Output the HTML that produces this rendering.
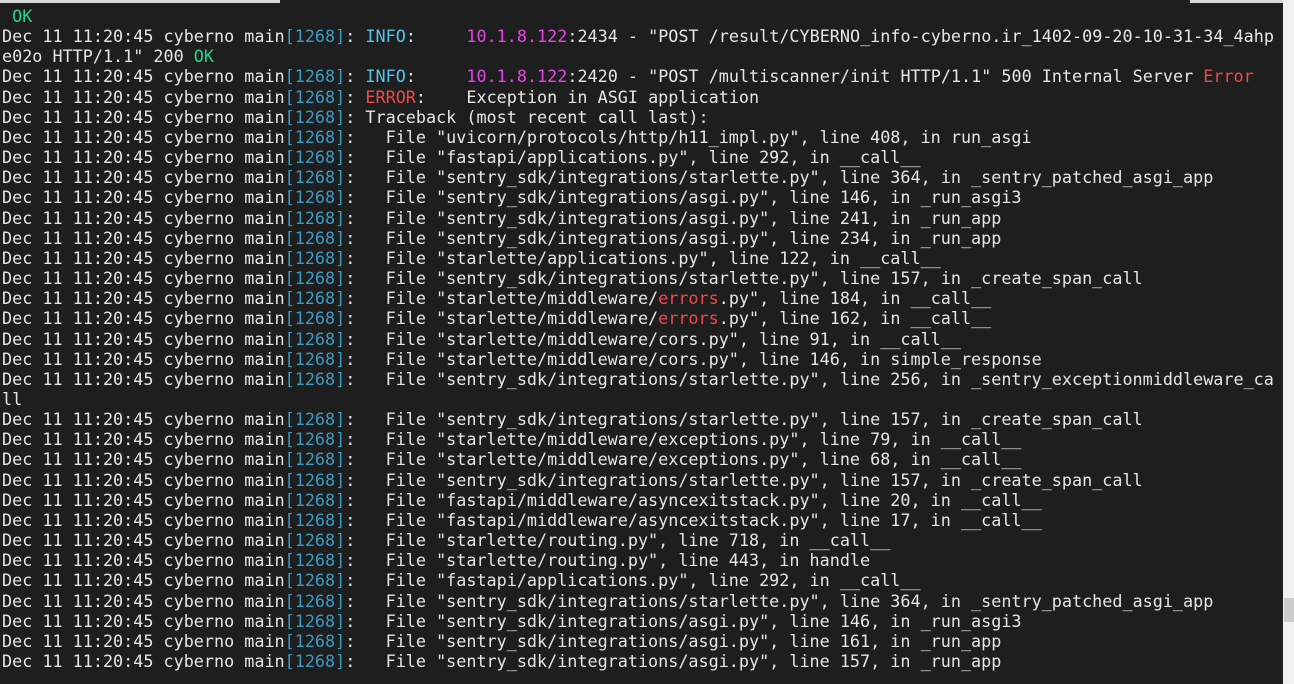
<!DOCTYPE html>
<html><head><meta charset="utf-8"><style>
html,body{margin:0;padding:0;overflow:hidden;width:1294px;height:684px;}
body{background:#1e1e1e;position:relative;}
.top{position:absolute;left:0;top:0;width:280px;height:3px;background:#d8d8d8;}
.top2{position:absolute;left:1190px;top:0;width:93px;height:3px;background:#d8d8d8;}
.sb{position:absolute;left:1283px;top:0;width:11px;height:684px;background:#f1f1f1;}
.th{position:absolute;left:1284px;top:598px;width:10px;height:24px;background:#cdcdcd;}
pre{position:absolute;left:2px;top:6px;margin:0;font-family:"DejaVu Sans Mono","Liberation Mono",monospace;font-size:16.78px;line-height:20.15px;color:#e6e6e6;}
.c{color:#3a9cc4}.i{color:#56c3ea}.m{color:#e545e5}.g{color:#24d38c}.r{color:#f0494c}
</style></head><body>
<div class="top"></div><div class="top2"></div>
<pre> <span class="g">OK</span>
Dec 11 11:20:45 cyberno main<span class="c">[1268]</span>: <span class="i">INFO</span>:     <span class="m">10.1.8.122</span>:2434 - "POST /result/CYBERNO_info-cyberno.ir_1402-09-20-10-31-34_4ahp
e02o HTTP/1.1" 200 <span class="g">OK</span>
Dec 11 11:20:45 cyberno main<span class="c">[1268]</span>: <span class="i">INFO</span>:     <span class="m">10.1.8.122</span>:2420 - "POST /multiscanner/init HTTP/1.1" 500 Internal Server <span class="r">Error</span>
Dec 11 11:20:45 cyberno main<span class="c">[1268]</span>: <span class="r">ERROR</span>:    Exception in ASGI application
Dec 11 11:20:45 cyberno main<span class="c">[1268]</span>: Traceback (most recent call last):
Dec 11 11:20:45 cyberno main<span class="c">[1268]</span>:   File "uvicorn/protocols/http/h11_impl.py", line 408, in run_asgi
Dec 11 11:20:45 cyberno main<span class="c">[1268]</span>:   File "fastapi/applications.py", line 292, in __call__
Dec 11 11:20:45 cyberno main<span class="c">[1268]</span>:   File "sentry_sdk/integrations/starlette.py", line 364, in _sentry_patched_asgi_app
Dec 11 11:20:45 cyberno main<span class="c">[1268]</span>:   File "sentry_sdk/integrations/asgi.py", line 146, in _run_asgi3
Dec 11 11:20:45 cyberno main<span class="c">[1268]</span>:   File "sentry_sdk/integrations/asgi.py", line 241, in _run_app
Dec 11 11:20:45 cyberno main<span class="c">[1268]</span>:   File "sentry_sdk/integrations/asgi.py", line 234, in _run_app
Dec 11 11:20:45 cyberno main<span class="c">[1268]</span>:   File "starlette/applications.py", line 122, in __call__
Dec 11 11:20:45 cyberno main<span class="c">[1268]</span>:   File "sentry_sdk/integrations/starlette.py", line 157, in _create_span_call
Dec 11 11:20:45 cyberno main<span class="c">[1268]</span>:   File "starlette/middleware/<span class="r">errors</span>.py", line 184, in __call__
Dec 11 11:20:45 cyberno main<span class="c">[1268]</span>:   File "starlette/middleware/<span class="r">errors</span>.py", line 162, in __call__
Dec 11 11:20:45 cyberno main<span class="c">[1268]</span>:   File "starlette/middleware/cors.py", line 91, in __call__
Dec 11 11:20:45 cyberno main<span class="c">[1268]</span>:   File "starlette/middleware/cors.py", line 146, in simple_response
Dec 11 11:20:45 cyberno main<span class="c">[1268]</span>:   File "sentry_sdk/integrations/starlette.py", line 256, in _sentry_exceptionmiddleware_ca
ll
Dec 11 11:20:45 cyberno main<span class="c">[1268]</span>:   File "sentry_sdk/integrations/starlette.py", line 157, in _create_span_call
Dec 11 11:20:45 cyberno main<span class="c">[1268]</span>:   File "starlette/middleware/exceptions.py", line 79, in __call__
Dec 11 11:20:45 cyberno main<span class="c">[1268]</span>:   File "starlette/middleware/exceptions.py", line 68, in __call__
Dec 11 11:20:45 cyberno main<span class="c">[1268]</span>:   File "sentry_sdk/integrations/starlette.py", line 157, in _create_span_call
Dec 11 11:20:45 cyberno main<span class="c">[1268]</span>:   File "fastapi/middleware/asyncexitstack.py", line 20, in __call__
Dec 11 11:20:45 cyberno main<span class="c">[1268]</span>:   File "fastapi/middleware/asyncexitstack.py", line 17, in __call__
Dec 11 11:20:45 cyberno main<span class="c">[1268]</span>:   File "starlette/routing.py", line 718, in __call__
Dec 11 11:20:45 cyberno main<span class="c">[1268]</span>:   File "starlette/routing.py", line 443, in handle
Dec 11 11:20:45 cyberno main<span class="c">[1268]</span>:   File "fastapi/applications.py", line 292, in __call__
Dec 11 11:20:45 cyberno main<span class="c">[1268]</span>:   File "sentry_sdk/integrations/starlette.py", line 364, in _sentry_patched_asgi_app
Dec 11 11:20:45 cyberno main<span class="c">[1268]</span>:   File "sentry_sdk/integrations/asgi.py", line 146, in _run_asgi3
Dec 11 11:20:45 cyberno main<span class="c">[1268]</span>:   File "sentry_sdk/integrations/asgi.py", line 161, in _run_app
Dec 11 11:20:45 cyberno main<span class="c">[1268]</span>:   File "sentry_sdk/integrations/asgi.py", line 157, in _run_app</pre>
<div class="sb"></div><div class="th"></div>
</body></html>
